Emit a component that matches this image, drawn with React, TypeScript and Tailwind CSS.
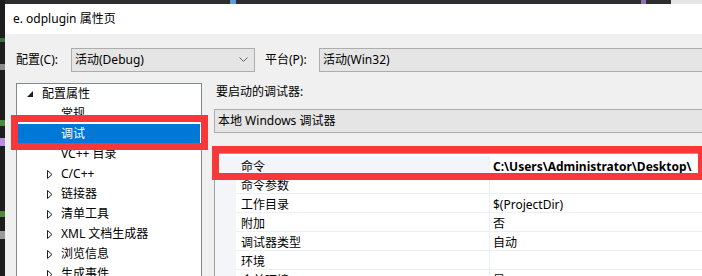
import React from 'react';

const treeItems: { label: string; level: 'root' | 'leaf' | 'group'; selected?: boolean }[] = [
  { label: '配置属性', level: 'root' },
  { label: '常规', level: 'leaf' },
  { label: '调试', level: 'leaf', selected: true },
  { label: 'VC++ 目录', level: 'leaf' },
  { label: 'C/C++', level: 'group' },
  { label: '链接器', level: 'group' },
  { label: '清单工具', level: 'group' },
  { label: 'XML 文档生成器', level: 'group' },
  { label: '浏览信息', level: 'group' },
  { label: '生成事件', level: 'group' },
];

const gridRows: { label: string; value: string; bold?: boolean; active?: boolean }[] = [
  { label: '命令', value: 'C:\\Users\\Administrator\\Desktop\\', bold: true, active: true },
  { label: '命令参数', value: '' },
  { label: '工作目录', value: '$(ProjectDir)' },
  { label: '附加', value: '否' },
  { label: '调试器类型', value: '自动' },
  { label: '环境', value: '' },
  { label: '合并环境', value: '是' },
];

const Chevron = () => (
  <svg width="9" height="6" viewBox="0 0 9 6">
    <polyline points="0.5,0.5 4.5,4.5 8.5,0.5" fill="none" stroke="#606060" strokeWidth="1" />
  </svg>
);

const App: React.FC = () => {
  return (
    <div className="relative w-[702px] h-[276px] overflow-hidden flex bg-[#1e1e1e] text-[12px] text-black font-['Noto_Sans','Noto_Sans_CJK_SC',sans-serif]">
      {/* 左侧编辑器残留 */}
      <div className="w-[5px] shrink-0 flex flex-col bg-[#1e1e1e]">
        <div className="h-[38px]" />
        <div className="h-[4px] bg-[#3f6e3f]" />
        <div className="h-[22px]" />
        <div className="h-[6px] bg-[#8a8a8a]" />
        <div className="h-[50px]" />
        <div className="h-[6px] bg-[#4e8a3e]" />
        <div className="h-[12px]" />
        <div className="h-[8px] bg-[#b98ee0]" />
        <div className="h-[65px]" />
        <div className="h-[6px] bg-[#4e8a3e]" />
        <div className="h-[14px]" />
        <div className="h-[8px] bg-[#9a9a9a]" />
      </div>

      <div className="flex-1 flex flex-col min-w-0">
        {/* 顶部暗条 */}
        <div className="h-[4px] shrink-0 flex bg-[#2d2d30]">
          <div className="ml-[225px] w-[6px] bg-[#5a9bd5]" />
          <div className="ml-[405px] w-[6px] bg-[#8e6fb0]" />
          <div className="ml-[25px] w-[32px] bg-[#e6e6e6]" />
        </div>

        <div className="flex-1 flex flex-col bg-[#f0f0f0] min-h-0">
          {/* 标题栏 */}
          <div className="h-[30px] shrink-0 bg-white flex items-center pl-[8px] leading-none">
            e. odplugin 属性页
          </div>

          <div className="flex-1 flex flex-col pl-[11px] pt-[14px] min-h-0">
            {/* 配置 / 平台 */}
            <div className="h-[24px] shrink-0 flex items-center leading-none">
              <div className="w-[55px] shrink-0">配置(C):</div>
              <div className="w-[184px] shrink-0 h-full border border-[#adadad] bg-[#e5e5e5] flex items-center justify-between pl-[3px] pr-[6px]">
                <span>活动(Debug)</span>
                <Chevron />
              </div>
              <div className="ml-[10px] w-[54px] shrink-0">平台(P):</div>
              <div className="w-[420px] shrink-0 h-full border border-[#adadad] bg-[#e5e5e5] flex items-center pl-[3px]">
                活动(Win32)
              </div>
            </div>

            <div className="mt-[11px] flex-1 flex min-h-0">
              {/* 树 */}
              <div className="w-[186px] shrink-0 border border-b-0 border-[#828790] bg-white">
                {treeItems.map((item) => (
                  <div
                    key={item.label}
                    className={`h-[20px] flex items-center leading-none mx-px ${item.selected ? 'bg-[#0078d7] text-white' : ''}`}
                  >
                    {item.level === 'root' && (
                      <>
                        <svg width="6" height="6" viewBox="0 0 6 6" className="ml-[9px]">
                          <polygon points="6,0 6,6 0,6" fill="#1e1e1e" />
                        </svg>
                        <span className="ml-[9px]">{item.label}</span>
                      </>
                    )}
                    {item.level === 'group' && (
                      <>
                        <svg width="6" height="9" viewBox="0 0 6 9" className="ml-[29px]">
                          <polygon points="0.5,0.5 5,4.5 0.5,8.5" fill="none" stroke="#1e1e1e" strokeWidth="1" />
                        </svg>
                        <span className="ml-[8px]">{item.label}</span>
                      </>
                    )}
                    {item.level === 'leaf' && <span className="ml-[43px]">{item.label}</span>}
                  </div>
                ))}
              </div>

              {/* 右侧 */}
              <div className="ml-[12px] flex-1 flex flex-col min-w-0">
                <div className="h-[18px] shrink-0 flex items-center pl-[2px] leading-none">要启动的调试器:</div>
                <div className="mt-[8px] h-[24px] shrink-0 w-[600px] border border-[#adadad] bg-[#e5e5e5] flex items-center pl-[3px] leading-none">
                  本地 Windows 调试器
                </div>
                <div className="mt-[20px] shrink-0 w-[600px] border-l border-t border-[#a0a0a0] bg-white pt-[2px]">
                  {gridRows.map((row) => (
                    <div key={row.label} className="h-[19px] flex leading-none">
                      <div className="w-[21px] shrink-0 bg-[#f3f5f9]" />
                      <div
                        className={`w-[253px] shrink-0 flex items-center pt-[4px] pl-[5px] border-b border-[#eceff3] ${row.active ? 'bg-[#f2f5fa]' : ''}`}
                      >
                        {row.label}
                      </div>
                      <div
                        className={`flex-1 flex items-center pt-[4px] pl-[3px] border-l border-b border-[#eceff3] ${row.bold ? 'font-bold' : ''}`}
                      >
                        {row.value}
                      </div>
                    </div>
                  ))}
                </div>
              </div>
            </div>
          </div>
        </div>
      </div>

      {/* 红框标注 */}
      <div className="absolute left-[11px] top-[115px] w-[197px] h-[35px] border-[7px] border-[#f83838]" />
      <div className="absolute left-[212px] top-[146px] w-[490px] h-[34px] border-[7px] border-r-[4px] border-[#f83838]" />
    </div>
  );
};

export default App;
